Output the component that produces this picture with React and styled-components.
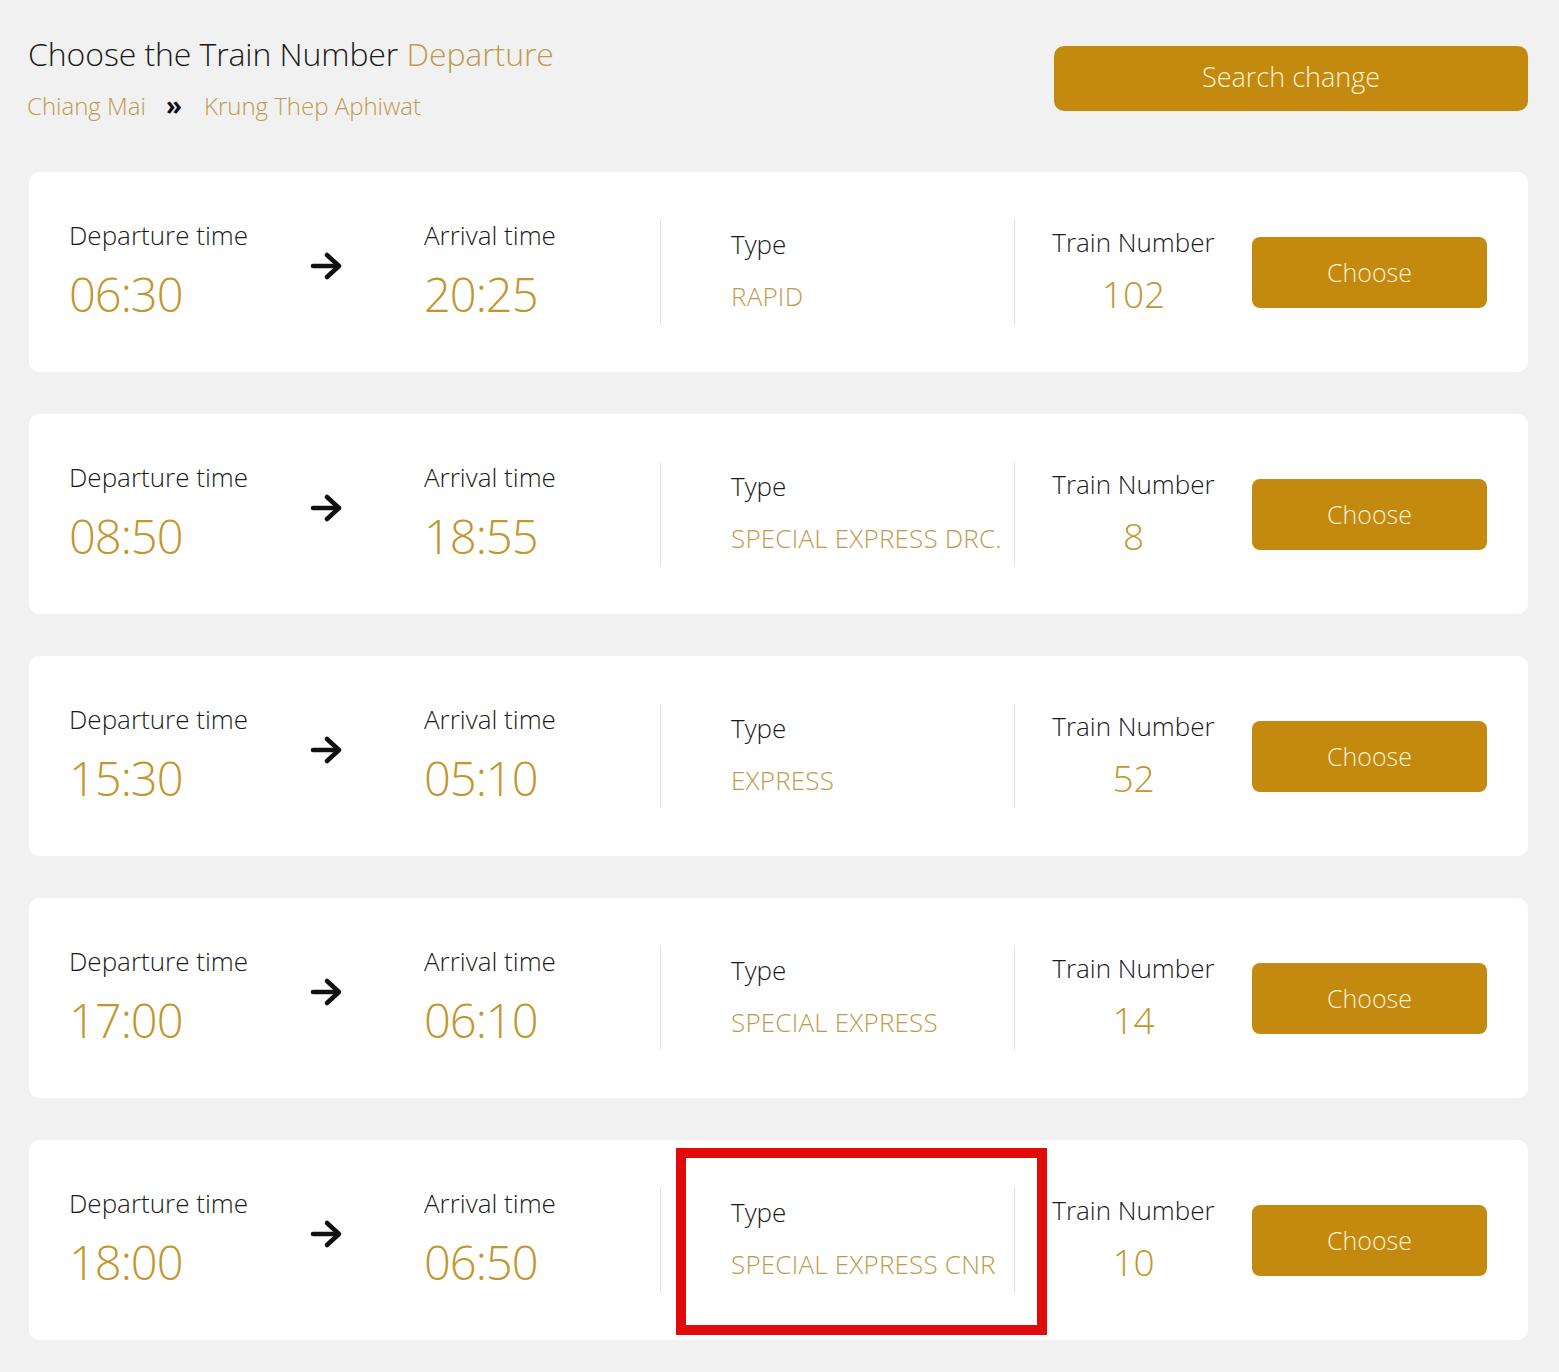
import React from 'react'
import styled, { createGlobalStyle } from 'styled-components'

const GlobalStyle = createGlobalStyle`
  html, body {
    margin: 0;
    padding: 0;
    background: #f1f1f1;
  }
  body {
    font-family: "Open Sans", "Noto Sans", sans-serif;
    font-weight: 300;
    color: #1a1a1a;
  }
`

const gold = '#c3962f'
const goldText = '#bf9a4e'
const btnGold = '#c48a0f'

const trains = [
  { dep: '06:30', arr: '20:25', type: 'RAPID', number: '102' },
  { dep: '08:50', arr: '18:55', type: 'SPECIAL EXPRESS DRC.', number: '8' },
  { dep: '15:30', arr: '05:10', type: 'EXPRESS', number: '52' },
  { dep: '17:00', arr: '06:10', type: 'SPECIAL EXPRESS', number: '14' },
  { dep: '18:00', arr: '06:50', type: 'SPECIAL EXPRESS CNR', number: '10', marked: true },
]

const Page = styled.div`
  padding: 32px 31px 31px 29px;
`

const Header = styled.div`
  display: flex;
  justify-content: space-between;
  align-items: flex-start;
  margin-bottom: 49px;
`

const TitleBlock = styled.div`
  display: flex;
  flex-direction: column;
  gap: 13px;
`

const Title = styled.h1`
  margin: 0;
  font-size: 32px;
  font-weight: 300;
  line-height: 44px;
  color: #1a1a1a;
  margin-left: -1px;
  letter-spacing: -0.1px;
  span {
    color: ${goldText};
  }
`

const Route = styled.div`
  display: flex;
  align-items: center;
  font-size: 24px;
  line-height: 34px;
  color: ${goldText};
  margin-left: -2px;
`

const Chevrons = styled.span`
  color: #111;
  font-weight: 700;
  font-size: 26px;
  line-height: 1;
  margin: -3px 22px 0 20px;
`

const PrimaryButton = styled.button`
  border: none;
  background: ${btnGold};
  color: #fbf1d6;
  font-family: inherit;
  font-weight: 300;
  cursor: pointer;
  border-radius: ${p => (p.$small ? '8px' : '10px')};
  width: ${p => (p.$small ? '235px' : '474px')};
  height: ${p => (p.$small ? '71px' : '65px')};
  font-size: ${p => (p.$small ? '25px' : '27px')};
  margin-top: ${p => (p.$small ? '0' : '14px')};
  padding: ${p => (p.$small ? '0' : '0 0 4px')};
`

const List = styled.div`
  display: flex;
  flex-direction: column;
  gap: 42px;
`

const Card = styled.div`
  position: relative;
  background: #fff;
  border-radius: 10px;
  height: 200px;
  padding: 0 41px 0 40px;
  display: flex;
  align-items: center;
`

const TimeCol = styled.div`
  width: ${p => p.$w}px;
  display: flex;
  flex-direction: column;
  margin-top: -2px;
`

const Label = styled.div`
  font-size: 26px;
  line-height: 30px;
  color: #1a1a1a;
  white-space: nowrap;
`

const Time = styled.div`
  font-size: 47px;
  line-height: 56px;
  margin-top: 16px;
  color: ${gold};
  letter-spacing: -1px;
`

const ArrowCell = styled.div`
  width: 114px;
  display: flex;
  align-items: center;
  margin-top: -12px;
`

const Divider = styled.div`
  width: 1px;
  height: 104px;
  background: #e2e2e2;
  align-self: center;
`

const TypeCol = styled.div`
  width: 283px;
  padding-left: 70px;
  display: flex;
  flex-direction: column;
  gap: 22px;
  margin-top: -4px;
`

const TypeValue = styled.div`
  font-size: 26px;
  line-height: 30px;
  color: ${goldText};
  white-space: nowrap;
  letter-spacing: 0.2px;
`

const NumberCol = styled.div`
  width: 237px;
  display: flex;
  flex-direction: column;
  align-items: center;
  margin-top: 0;
`

const TrainNo = styled.div`
  font-size: 37px;
  line-height: 46px;
  margin-top: 14px;
  color: ${gold};
`

const Marker = styled.div`
  position: absolute;
  left: 647px;
  top: 8px;
  width: 351px;
  height: 167px;
  border: 10px solid #e30a0a;
  pointer-events: none;
`

function Arrow() {
  return (
    <svg width="34" height="30" viewBox="0 0 34 30" fill="none">
      <path d="M3 15 H28" stroke="#111" strokeWidth="4.5" strokeLinecap="round" />
      <path d="M17 4 L29 15 L17 26" stroke="#111" strokeWidth="4.5" strokeLinecap="round" strokeLinejoin="round" />
    </svg>
  )
}

function TrainCard({ t }) {
  return (
    <Card>
      <TimeCol $w={241}>
        <Label>Departure time</Label>
        <Time>{t.dep}</Time>
      </TimeCol>
      <ArrowCell>
        <Arrow />
      </ArrowCell>
      <TimeCol $w={236}>
        <Label>Arrival time</Label>
        <Time>{t.arr}</Time>
      </TimeCol>
      <Divider />
      <TypeCol>
        <Label>Type</Label>
        <TypeValue>{t.type}</TypeValue>
      </TypeCol>
      <Divider />
      <NumberCol>
        <Label>Train Number</Label>
        <TrainNo>{t.number}</TrainNo>
      </NumberCol>
      <PrimaryButton $small>Choose</PrimaryButton>
      {t.marked && <Marker />}
    </Card>
  )
}

export default function App() {
  return (
    <>
      <GlobalStyle />
      <Page>
        <Header>
          <TitleBlock>
            <Title>
              Choose the Train Number <span>Departure</span>
            </Title>
            <Route>
              <span>Chiang Mai</span>
              <Chevrons>»</Chevrons>
              <span>Krung Thep Aphiwat</span>
            </Route>
          </TitleBlock>
          <PrimaryButton>Search change</PrimaryButton>
        </Header>
        <List>
          {trains.map(t => (
            <TrainCard key={t.number} t={t} />
          ))}
        </List>
      </Page>
    </>
  )
}
